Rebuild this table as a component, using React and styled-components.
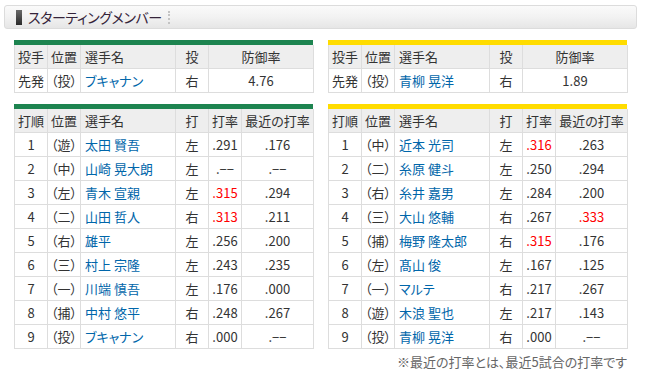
import React from 'react';
import styled, { createGlobalStyle } from 'styled-components';

const GlobalStyle = createGlobalStyle`
  html, body {
    margin: 0;
    padding: 0;
    background: #ffffff;
  }
  body {
    font-family: "Noto Sans CJK JP", "Noto Sans", sans-serif;
    color: #333333;
    font-feature-settings: "palt";
  }
`;

const Page = styled.div`
  width: 645px;
  height: 387px;
  padding-top: 5px;
  box-sizing: border-box;
`;

const TitleBox = styled.div`
  margin: 0 8px 0 4px;
  height: 24px;
  box-sizing: border-box;
  border: 1px solid #dcdcdc;
  border-radius: 3px;
  background: linear-gradient(#fafafa 0%, #f2f2f2 50%, #e6e6e6 100%);
  display: flex;
  align-items: center;
  padding-left: 11px;
  gap: 6px;
`;

const TitleMark = styled.span`
  width: 6px;
  height: 15px;
  background: linear-gradient(#6a6a6a, #2a2a2a);
`;

const TitleText = styled.h2`
  margin: 0;
  font-size: 14px;
  font-weight: normal;
  letter-spacing: -0.4px;
  color: #35243a;
`;

const TitleDots = styled.span`
  width: 0;
  height: 13px;
  border-left: 2px dotted #c4c4c4;
`;

const Grid = styled.div`
  display: grid;
  grid-template-columns: 299px 299px;
  column-gap: 15px;
  row-gap: 11px;
  padding: 11px 0 0 14px;
`;

const Team = styled.div`
  border-top: 5px solid ${(p) => p.$color};
`;

const Table = styled.table`
  width: 299px;
  border-collapse: collapse;
  table-layout: fixed;
  font-size: 13px;
`;

const Col = styled.col`
  width: ${(p) => p.$w}px;
`;

const Th = styled.th`
  height: 23px;
  padding: 0 0 0 ${(p) => (p.$left ? '4px' : '0')};
  border: 1px solid #dddddd;
  border-top: none;
  background: #eeeeee;
  font-weight: normal;
  text-align: ${(p) => (p.$left ? 'left' : 'center')};
  color: #333333;
  white-space: nowrap;
  overflow: hidden;
`;

const Td = styled.td`
  height: 23px;
  padding: 0 0 0 ${(p) => (p.$left ? '4px' : '0')};
  border: 1px solid #dddddd;
  text-align: ${(p) => (p.$left ? 'left' : 'center')};
  color: ${(p) => (p.$red ? '#ff0000' : '#333333')};
  white-space: nowrap;
  overflow: hidden;
`;

const Name = styled.a`
  color: #0066aa;
  text-decoration: none;
`;

const Note = styled.p`
  grid-column: 2;
  margin: -8px 0 0;
  text-align: right;
  font-size: 13px;
  color: #666666;
`;

const NONE = '.−−';

const pitchers = [
  { color: '#1d8450', name: 'ブキャナン', hand: '右', era: '4.76' },
  { color: '#ffdc00', name: '青柳 晃洋', hand: '右', era: '1.89' },
];

const lineups = [
  {
    color: '#1d8450',
    rows: [
      ['1', '遊', '太田 賢吾', '左', '.291', '.176'],
      ['2', '中', '山崎 晃大朗', '左', NONE, NONE],
      ['3', '左', '青木 宣親', '左', '.315', '.294'],
      ['4', '二', '山田 哲人', '右', '.313', '.211'],
      ['5', '右', '雄平', '左', '.256', '.200'],
      ['6', '三', '村上 宗隆', '左', '.243', '.235'],
      ['7', '一', '川端 慎吾', '左', '.176', '.000'],
      ['8', '捕', '中村 悠平', '右', '.248', '.267'],
      ['9', '投', 'ブキャナン', '右', '.000', NONE],
    ],
  },
  {
    color: '#ffdc00',
    rows: [
      ['1', '中', '近本 光司', '左', '.316', '.263'],
      ['2', '二', '糸原 健斗', '左', '.250', '.294'],
      ['3', '右', '糸井 嘉男', '左', '.284', '.200'],
      ['4', '三', '大山 悠輔', '右', '.267', '.333'],
      ['5', '捕', '梅野 隆太郎', '右', '.315', '.176'],
      ['6', '左', '髙山 俊', '左', '.167', '.125'],
      ['7', '一', 'マルテ', '右', '.217', '.267'],
      ['8', '遊', '木浪 聖也', '左', '.217', '.143'],
      ['9', '投', '青柳 晃洋', '右', '.000', NONE],
    ],
  },
];

const isHot = (v) => v !== NONE && parseFloat(v) >= 0.3;

function PitcherTable({ p }) {
  return (
    <Team $color={p.color}>
      <Table>
        <colgroup>
          <Col $w={33} />
          <Col $w={33} />
          <Col $w={95} />
          <Col $w={33} />
          <Col $w={105} />
        </colgroup>
        <thead>
          <tr>
            <Th>投手</Th>
            <Th>位置</Th>
            <Th $left>選手名</Th>
            <Th>投</Th>
            <Th>防御率</Th>
          </tr>
        </thead>
        <tbody>
          <tr>
            <Td>先発</Td>
            <Td>（投）</Td>
            <Td $left><Name>{p.name}</Name></Td>
            <Td>{p.hand}</Td>
            <Td>{p.era}</Td>
          </tr>
        </tbody>
      </Table>
    </Team>
  );
}

function LineupTable({ team }) {
  return (
    <Team $color={team.color}>
      <Table>
        <colgroup>
          <Col $w={33} />
          <Col $w={33} />
          <Col $w={95} />
          <Col $w={33} />
          <Col $w={33} />
          <Col $w={72} />
        </colgroup>
        <thead>
          <tr>
            <Th>打順</Th>
            <Th>位置</Th>
            <Th $left>選手名</Th>
            <Th>打</Th>
            <Th>打率</Th>
            <Th>最近の打率</Th>
          </tr>
        </thead>
        <tbody>
          {team.rows.map((r) => (
            <tr key={r[0]}>
              <Td>{r[0]}</Td>
              <Td>（{r[1]}）</Td>
              <Td $left><Name>{r[2]}</Name></Td>
              <Td>{r[3]}</Td>
              <Td $red={isHot(r[4])}>{r[4]}</Td>
              <Td $red={isHot(r[5])}>{r[5]}</Td>
            </tr>
          ))}
        </tbody>
      </Table>
    </Team>
  );
}

export default function App() {
  return (
    <Page>
      <GlobalStyle />
      <TitleBox>
        <TitleMark />
        <TitleText>スターティングメンバー</TitleText>
        <TitleDots />
      </TitleBox>
      <Grid>
        {pitchers.map((p) => (
          <PitcherTable key={p.name} p={p} />
        ))}
        {lineups.map((t) => (
          <LineupTable key={t.color} team={t} />
        ))}
        <Note>※最近の打率とは、最近5試合の打率です</Note>
      </Grid>
    </Page>
  );
}
